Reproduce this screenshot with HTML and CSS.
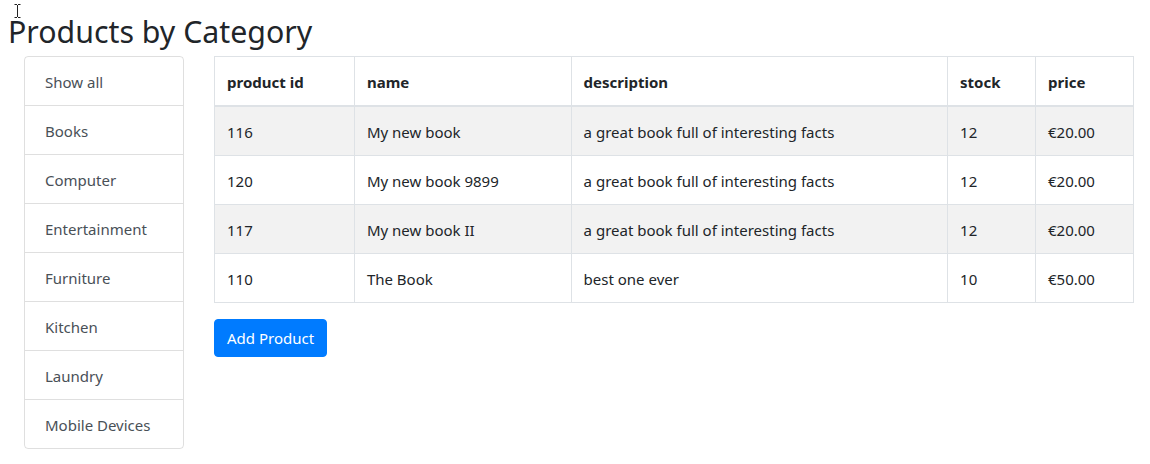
FILE: index.html
```html
<!DOCTYPE html>
<html lang="en">
<head>
<meta charset="utf-8">
<title>Products by Category</title>
<link rel="stylesheet" href="styles.css">
</head>
<body>
<svg class="cursor" width="7" height="14" viewBox="0 0 7 14" aria-hidden="true"><path d="M0.5 0.5h2.5M4 0.5h2.5M3.5 1v12M0.5 13.5h2.5M4 13.5h2.5" stroke="#222" stroke-width="1" fill="none"/></svg>
<h2 class="page-title">Products by Category</h2>
<div class="layout">
  <aside class="categories">
    <div class="list-group">
      <a class="list-item">Show all</a>
      <a class="list-item">Books</a>
      <a class="list-item">Computer</a>
      <a class="list-item">Entertainment</a>
      <a class="list-item">Furniture</a>
      <a class="list-item">Kitchen</a>
      <a class="list-item">Laundry</a>
      <a class="list-item">Mobile Devices</a>
    </div>
  </aside>
  <main class="products">
    <table class="table">
      <thead>
        <tr>
          <th class="c-id">product id</th>
          <th class="c-name">name</th>
          <th class="c-desc">description</th>
          <th class="c-stock">stock</th>
          <th class="c-price">price</th>
        </tr>
      </thead>
      <tbody>
        <tr><td>116</td><td>My new book</td><td>a great book full of interesting facts</td><td>12</td><td>€20.00</td></tr>
        <tr><td>120</td><td>My new book 9899</td><td>a great book full of interesting facts</td><td>12</td><td>€20.00</td></tr>
        <tr><td>117</td><td>My new book II</td><td>a great book full of interesting facts</td><td>12</td><td>€20.00</td></tr>
        <tr><td>110</td><td>The Book</td><td>best one ever</td><td>10</td><td>€50.00</td></tr>
      </tbody>
    </table>
    <button class="btn-primary" type="button">Add Product</button>
  </main>
</div>
</body>
</html>
```

FILE: styles.css
```css
* { box-sizing: border-box; }
html, body { margin: 0; padding: 0; background: #fff; }
body {
  font-family: "Noto Sans", "Open Sans", sans-serif;
  font-size: 15px;
  line-height: 24px;
  color: #212529;
  position: relative;
}
.cursor { position: absolute; left: 14px; top: 4px; }
.page-title {
  margin: 0;
  padding: 12px 0 0 8px;
  font-size: 30.3px;
  font-weight: 400;
  line-height: 40px;
  height: 56px;
  color: #212529;
}
.layout {
  display: flex;
  gap: 30px;
  padding: 0 16px 0 24px;
}
.categories { width: 160px; flex: none; }
.list-group {
  display: flex;
  flex-direction: column;
  border: 1px solid rgba(0,0,0,.125);
  border-radius: 4px;
}
.list-item {
  display: block;
  padding: 13px 20px 11px 20px;
  color: #495057;
  border-top: 1px solid rgba(0,0,0,.125);
  line-height: 24px;
}
.list-item:first-child { border-top: none; }
.products { flex: 1; min-width: 0; }
.table {
  width: 100%;
  border-collapse: collapse;
  margin-bottom: 16px;
  border: 1px solid #dee2e6;
}
.table th, .table td {
  padding: 13px 12px 11px 12px;
  border: 1px solid #dee2e6;
  text-align: left;
  vertical-align: top;
  line-height: 24px;
}
.table th { font-weight: 700; border-bottom-width: 2px; }
.table tbody tr:nth-child(odd) { background: #f2f2f2; }
.c-id { width: 140px; }
.c-name { width: 217px; }
.c-desc { width: 377px; }
.c-stock { width: 88px; }
.c-price { width: 98px; }
.btn-primary {
  font-family: inherit;
  font-size: 15px;
  line-height: 24px;
  padding: 6px 12px;
  color: #fff;
  background: #007bff;
  border: 1px solid #007bff;
  border-radius: 4px;
  cursor: pointer;
}
```
